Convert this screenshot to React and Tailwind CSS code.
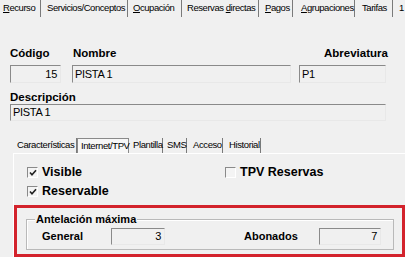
const topTabs = [
  { pre: "", u: "R", post: "ecurso", w: 41, pl: 3 },
  { pre: "Servicios/Conceptos", u: "", post: "", w: 87, pl: 6 },
  { pre: "", u: "O", post: "cupación", w: 54, pl: 5 },
  { pre: "Reservas\u00a0", u: "d", post: "irectas", w: 77, pl: 5 },
  { pre: "", u: "P", post: "agos", w: 34, pl: 6 },
  { pre: "", u: "A", post: "grupaciones", w: 62, pl: 8 },
  { pre: "Tarifas", u: "", post: "", w: 38, pl: 7 },
  { pre: "1", u: "", post: "", w: 20, pl: 6, last: true },
];

const innerTabs = [
  { label: "Características", w: 64, pl: 4 },
  { label: "Internet/TPV", w: 52, pl: 3, active: true },
  { label: "Plantilla", w: 34, pl: 4 },
  { label: "SMS", w: 24, pl: 4 },
  { label: "Acceso", w: 36, pl: 6 },
  { label: "Historial", w: 38, pl: 6 },
];

const Field = ({ w, value, right, h = 18 }) => (
  <div
    className={`flex items-center border-t border-l border-t-[#8a8a8a] border-l-[#8a8a8a] border-b border-r border-b-[#e8e8e8] border-r-[#e8e8e8] bg-[#f0f0f0] text-[11px] tracking-[-0.3px] ${right ? "justify-end pr-[3px]" : "pl-[2px]"}`}
    style={{ width: w, height: h }}
  >
    {value}
  </div>
);

const Check = ({ checked }) => (
  <div className="flex h-[11px] w-[11px] items-center justify-center border-t border-l border-t-[#8a8a8a] border-l-[#8a8a8a] border-b border-r border-b-white border-r-white bg-[#f4f4f4]">
    {checked && (
      <svg width="8" height="8" viewBox="0 0 8 8">
        <path d="M1 3.5 L3 5.8 L7 1.2" fill="none" stroke="#222" strokeWidth="1.6" />
      </svg>
    )}
  </div>
);

export default function App() {
  return (
    <div className="h-[257px] w-[405px] overflow-hidden bg-[#f0f0f0] text-black [font-family:'Liberation_Sans',Arial,sans-serif]">
      {/* tabs de arriba */}
      <div className="flex h-[17px] items-stretch text-[9.5px] tracking-[-0.45px]">
        {topTabs.map((t, i) => (
          <div
            key={i}
            className={`flex shrink-0 items-center whitespace-nowrap ${t.last ? "" : "border-r border-r-[#7a7a7a]"}`}
            style={{ width: t.w, paddingLeft: t.pl }}
          >
            <span>
              {t.pre}
              {t.u && <span className="underline underline-offset-1">{t.u}</span>}
              {t.post}
            </span>
          </div>
        ))}
      </div>

      {/* cabecera */}
      <div className="mt-[30px] pl-[10px] text-[11.5px] font-bold">
        <div className="flex h-[15px] items-end">
          <span className="w-[63px]">Código</span>
          <span className="w-[251px]">Nombre</span>
          <span className="w-[63px] text-right">Abreviatura</span>
        </div>
        <div className="mt-[3px] flex font-normal">
          <Field w={51} value="15" right />
          <div className="ml-[11px]">
            <Field w={219} value="PISTA 1" />
          </div>
          <div className="ml-[8px]">
            <Field w={87} value="P1" />
          </div>
        </div>
        <div className="mt-[8px] h-[13px] leading-[13px]">Descripción</div>
        <div className="font-normal">
          <Field w={376} value="PISTA 1" h={17} />
        </div>
      </div>

      {/* pestañas internas */}
      <div className="mt-[17px] ml-[13px] flex h-[15px] items-stretch text-[9.5px] tracking-[-0.4px]">
        {innerTabs.map((t) => (
          <div
            key={t.label}
            className={`flex shrink-0 items-center whitespace-nowrap ${t.active ? "border border-b-0 border-[#8a8a8a] bg-[#f7f7f7]" : "border-r border-r-[#7a7a7a]"}`}
            style={{ width: t.w, paddingLeft: t.pl }}
          >
            {t.label}
          </div>
        ))}
      </div>

      <div className="ml-[13px] border-t border-l border-white pt-[11px] text-[12.5px] font-bold">
        <div className="flex h-[15px] items-center">
          <div className="ml-[13px] flex w-[198px] items-center gap-[4px]">
            <Check checked />
            <span>Visible</span>
          </div>
          <div className="flex items-center gap-[4px]">
            <Check />
            <span>TPV Reservas</span>
          </div>
        </div>
        <div className="mt-[4px] ml-[13px] flex h-[15px] items-center gap-[4px]">
          <Check checked />
          <span>Reservable</span>
        </div>

        {/* antelación */}
        <div className="mt-[6px] h-[52px] w-[391px] border-[3px] border-[#d3232c] pl-[9px] pt-[11px]">
          <div className="h-[31px] w-[368px] border border-[#b9b9b9] shadow-[inset_1px_1px_0_white] text-[11px]">
            <div className="-mt-[7px] ml-[8px] w-fit bg-[#f0f0f0] px-[1px] leading-[12px]">Antelación máxima</div>
            <div className="mt-[3px] flex items-center">
              <span className="ml-[15px] w-[69px]">General</span>
              <div className="font-normal">
                <Field w={54} value="3" right h={17} />
              </div>
              <span className="ml-[79px] w-[75px]">Abonados</span>
              <div className="font-normal">
                <Field w={62} value="7" right h={17} />
              </div>
            </div>
          </div>
        </div>
      </div>
    </div>
  );
}
